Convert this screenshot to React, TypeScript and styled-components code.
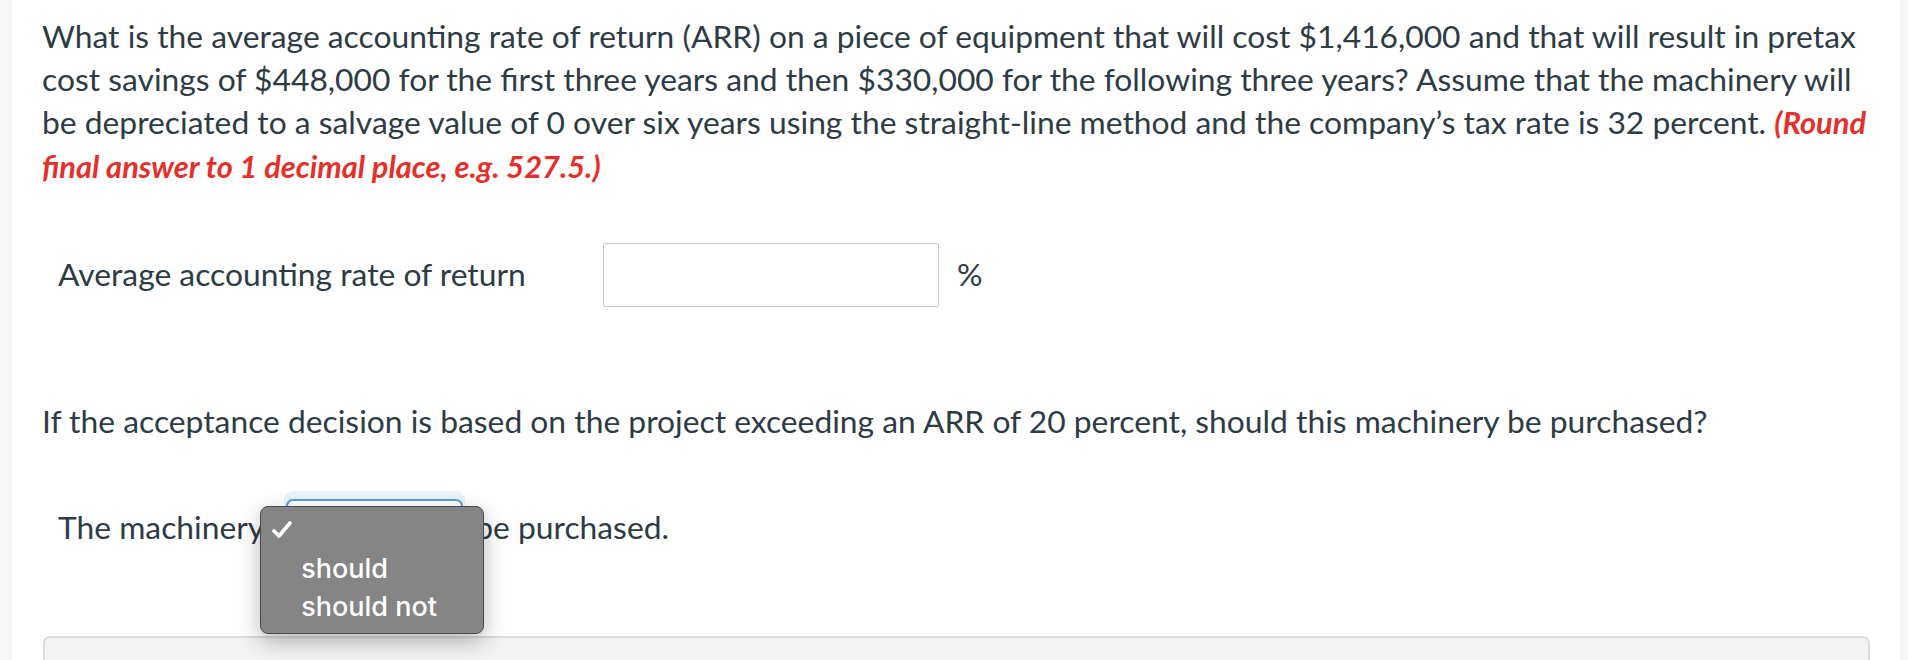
import * as React from 'react';
import styled, { createGlobalStyle } from 'styled-components';

const GlobalStyle = createGlobalStyle`
  html, body {
    margin: 0;
    padding: 0;
    background: #fff;
  }
  body {
    font-family: Lato, "Open Sans", sans-serif;
    color: #2d3b45;
    overflow: hidden;
  }
`;

const Page = styled.div`
  display: flex;
  flex-direction: row;
  width: 1908px;
  height: 660px;
  overflow: hidden;
`;

const SideStrip = styled.div<{ $width: number }>`
  flex: 0 0 ${(p) => p.$width}px;
  background: #f7f7f7;
`;

const Main = styled.div`
  flex: 1;
  display: flex;
  flex-direction: column;
  padding: 15px 26px 0 30px;
  font-size: 31.8px;
  line-height: 43.2px;
`;

const Question = styled.p`
  margin: 0;
`;

const Hint = styled.span`
  color: #e5302a;
  font-weight: 700;
  font-style: italic;
  font-size: 30.8px;
`;

const AnswerRow = styled.div<{ $top: number }>`
  display: flex;
  flex-direction: row;
  align-items: center;
  margin-top: ${(p) => p.$top}px;
  padding-left: 16px;
`;

const Label = styled.div`
  width: 545px;
`;

const NumberInput = styled.input`
  box-sizing: border-box;
  width: 336px;
  height: 64px;
  border: 1px solid #c8c8c8;
  border-radius: 2px;
  background: #fff;
  font: inherit;
  padding: 0 10px;
`;

const Unit = styled.span`
  margin-left: 18px;
`;

const Prompt = styled.p`
  margin: 93px 0 0 0;
`;

const SelectWrap = styled.span`
  position: relative;
  display: inline-block;
  box-sizing: border-box;
  width: 177px;
  height: 58px;
  margin: 0 12px 0 22px;
  border: 2px solid #5e9ed6;
  border-radius: 7px;
  box-shadow: 0 -6px 0 2px rgba(94, 158, 214, 0.12);
  background: #fff;
`;

const Popup = styled.div`
  position: absolute;
  left: -28px;
  top: 5px;
  box-sizing: border-box;
  width: 224px;
  height: 128px;
  padding: 4px 0;
  background: #858585;
  border: 1px solid #4c4c4c;
  border-radius: 8px;
  box-shadow: 0 8px 22px rgba(0, 0, 0, 0.28);
  font-family: Inter, "Noto Sans", sans-serif;
  font-size: 27px;
  font-weight: 500;
  color: #fff;
  z-index: 2;
`;

const Option = styled.div`
  display: flex;
  align-items: center;
  height: 38px;
  padding-left: 40px;
  position: relative;
  line-height: 1;
`;

const Check = styled.svg`
  position: absolute;
  left: 11px;
  top: 10px;
`;

const BottomBox = styled.div`
  margin: 79px 4px 0 1px;
  height: 90px;
  background: #f3f3f3;
  border: 2px solid #dcdcdc;
  border-bottom: none;
  border-radius: 7px 7px 0 0;
`;

export default function App(): JSX.Element {
  return (
    <Page>
      <GlobalStyle />
      <SideStrip $width={12} />
      <Main>
        <Question>
          What is the average accounting rate of return (ARR) on a piece of equipment that will
          cost $1,416,000 and that will result in pretax cost savings of $448,000 for the first
          three years and then $330,000 for the following three years? Assume that the machinery
          will be depreciated to a salvage value of 0 over six years using the straight-line method
          and the company’s tax rate is 32 percent.{' '}
          <Hint>(Round final answer to 1 decimal place, e.g. 527.5.)</Hint>
        </Question>

        <AnswerRow $top={55}>
          <Label>Average accounting rate of return</Label>
          <NumberInput type="text" />
          <Unit>%</Unit>
        </AnswerRow>

        <Prompt>
          If the acceptance decision is based on the project exceeding an ARR of 20 percent, should
          this machinery be purchased?
        </Prompt>

        <AnswerRow $top={56}>
          <span>The machinery</span>
          <SelectWrap>
            <Popup>
              <Option>
                <Check width="20" height="18" viewBox="0 0 20 18">
                  <path
                    d="M2 10 L7 15 L18 2"
                    fill="none"
                    stroke="#fff"
                    strokeWidth="3.6"
                    strokeLinecap="round"
                    strokeLinejoin="round"
                  />
                </Check>
              </Option>
              <Option>should</Option>
              <Option>should not</Option>
            </Popup>
          </SelectWrap>
          <span>be purchased.</span>
        </AnswerRow>

        <BottomBox />
      </Main>
      <SideStrip $width={8} />
    </Page>
  );
}
